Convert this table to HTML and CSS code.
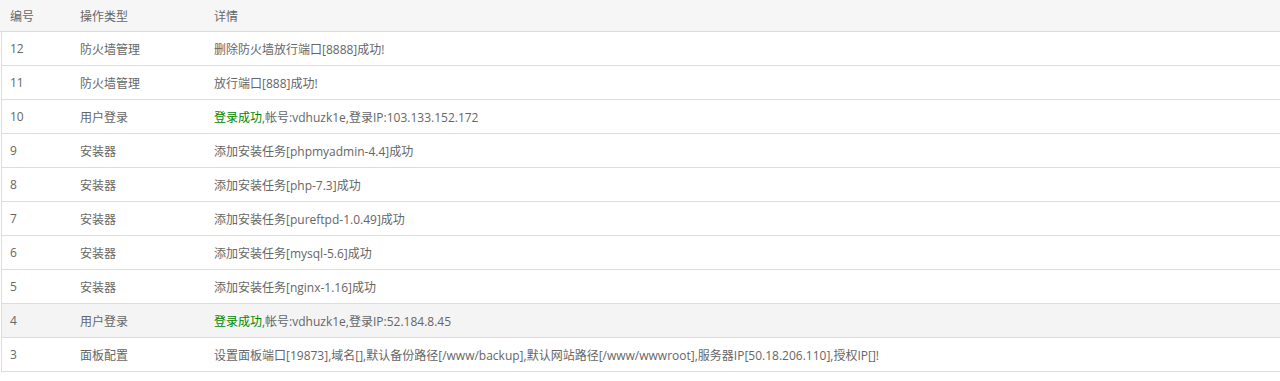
FILE: index.html
```html
<!DOCTYPE html>
<html lang="zh">
<head>
<meta charset="utf-8">
<link rel="stylesheet" href="styles.css">
</head>
<body>
<div class="log">
  <div class="row head">
    <div class="c1">编号</div><div class="c2">操作类型</div><div class="c3">详情</div>
  </div>
  <div class="bodyrows">
    <div class="row"><div class="c1">12</div><div class="c2">防火墙管理</div><div class="c3">删除防火墙放行端口[8888]成功!</div></div>
    <div class="row"><div class="c1">11</div><div class="c2">防火墙管理</div><div class="c3">放行端口[888]成功!</div></div>
    <div class="row"><div class="c1">10</div><div class="c2">用户登录</div><div class="c3"><span class="ok">登录成功</span>,帐号:vdhuzk1e,登录IP:103.133.152.172</div></div>
    <div class="row"><div class="c1">9</div><div class="c2">安装器</div><div class="c3">添加安装任务[phpmyadmin-4.4]成功</div></div>
    <div class="row"><div class="c1">8</div><div class="c2">安装器</div><div class="c3">添加安装任务[php-7.3]成功</div></div>
    <div class="row"><div class="c1">7</div><div class="c2">安装器</div><div class="c3">添加安装任务[pureftpd-1.0.49]成功</div></div>
    <div class="row"><div class="c1">6</div><div class="c2">安装器</div><div class="c3">添加安装任务[mysql-5.6]成功</div></div>
    <div class="row"><div class="c1">5</div><div class="c2">安装器</div><div class="c3">添加安装任务[nginx-1.16]成功</div></div>
    <div class="row hover"><div class="c1">4</div><div class="c2">用户登录</div><div class="c3"><span class="ok">登录成功</span>,帐号:vdhuzk1e,登录IP:52.184.8.45</div></div>
    <div class="row"><div class="c1">3</div><div class="c2">面板配置</div><div class="c3">设置面板端口[19873],域名[],默认备份路径[/www/backup],默认网站路径[/www/wwwroot],服务器IP[50.18.206.110],授权IP[]!</div></div>
  </div>
</div>
</body>
</html>
```

FILE: styles.css
```css
html, body {
  margin: 0;
  padding: 0;
  background: #fff;
}
body {
  font-family: "Open Sans", "Noto Sans CJK SC", sans-serif;
  font-size: 12px;
  color: #666;
}
.log {
  width: 1280px;
}
.row {
  display: grid;
  grid-template-columns: 70px 134px 1fr;
  height: 33px;
  align-items: center;
  border-bottom: 1px solid #ddd;
  white-space: nowrap;
}
.row > div {
  padding-left: 10px;
}
.head {
  height: 31px;
  background: #f6f6f6;
}
.bodyrows {
  margin-left: 1px;
  border-left: 1px solid #ddd;
}
.bodyrows .row {
  grid-template-columns: 68px 134px 1fr;
}
.bodyrows .row > div.c1 {
  padding-left: 8px;
}
.hover {
  background: #f4f4f4;
}
.ok {
  color: #080;
}
```
